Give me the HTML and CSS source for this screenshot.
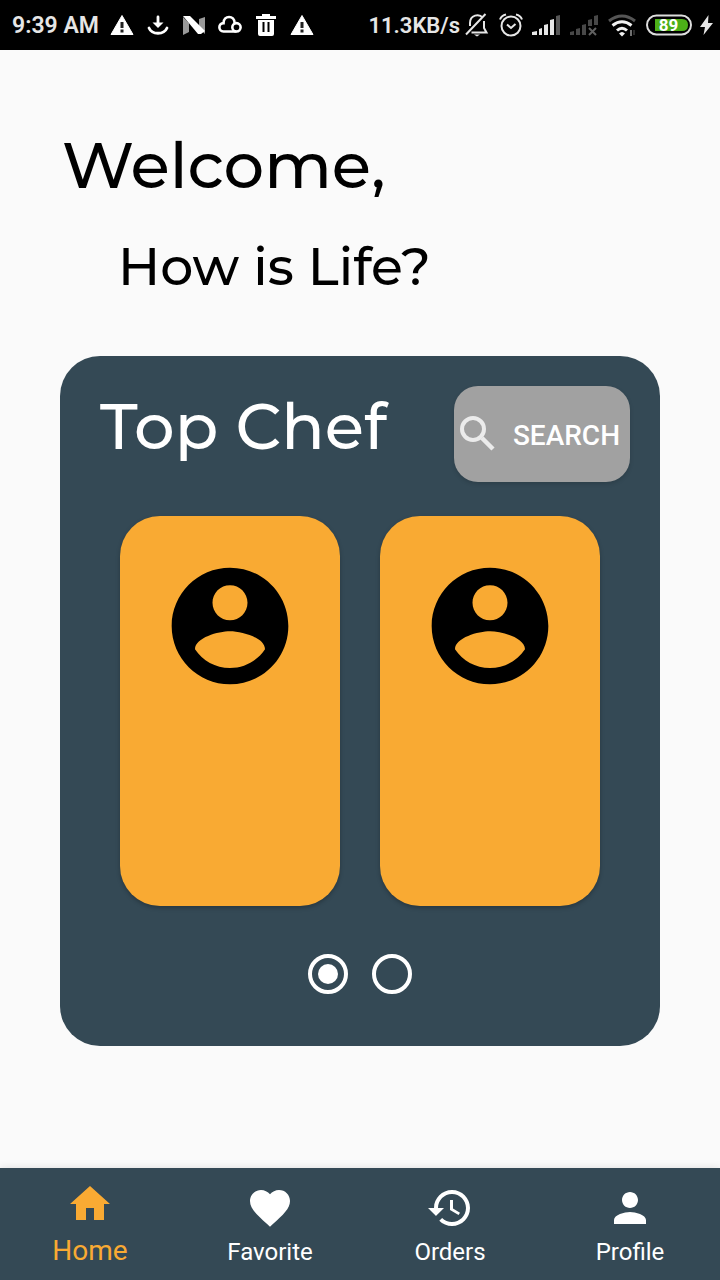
FILE: index.html
```html
<!DOCTYPE html>
<html lang="en">
<head>
<meta charset="utf-8">
<meta name="viewport" content="width=device-width, initial-scale=1">
<title>Top Chef</title>
<link rel="stylesheet" href="styles.css">
</head>
<body>
<header class="status">
  <span class="status-text">9:39 AM</span>
  <div class="notices">
    <svg width="24" height="24" viewBox="0 0 24 24"><path fill="#fff" stroke="#fff" stroke-linejoin="round" d="M12 2.500 23 21.500H1z"/><path d="M10.500 9h3v6h-3zM10.500 16.500h3v3h-3z" fill="#222"/></svg>
    <svg width="24" height="24" viewBox="0 0 24 24" fill="none" stroke="#fff" stroke-width="2.800"><path d="M12 4v8M3 15c3 7 15 7 18 0" stroke-linecap="round"/><path d="M6.500 9.500h11L12 15z" fill="#fff" stroke="none"/></svg>
    <svg width="24" height="24" viewBox="0 0 24 24"><path d="M1 4l6 6v9l-6 3zM23 4v17l-6-6V6z" fill="#999"/><path d="M1 3h7l15 15-4 3h-3z" fill="#fff"/></svg>
    <svg width="24" height="24" viewBox="0 0 26 24" fill="none" stroke="#fff" stroke-width="2.800"><path d="M20 19H6C0 19 0 10 6 10 6 1 18 1 18 10"/><circle cx="20" cy="14.500" r="4.500"/></svg>
    <svg width="24" height="24" viewBox="0 0 24 24"><path d="M2 3h6V1h8v2h6v3H2zM4 7h16v14q0 2-2 2H6q-2 0-2-2z" fill="#fff"/><path d="M9.500 9v10M14.500 9v10" stroke="#000" stroke-width="2"/></svg>
    <svg width="24" height="24" viewBox="0 0 24 24"><path fill="#fff" stroke="#fff" stroke-linejoin="round" d="M12 2.500 23 21.500H1z"/><path d="M10.500 9h3v6h-3zM10.500 16.500h3v3h-3z" fill="#222"/></svg>
  </div>
  <span class="status-text speed">11.3KB/s</span>
  <div class="system">
    <svg width="26" height="26" viewBox="0 0 26 26" fill="none" stroke="#e6e6e6" stroke-width="2"><path d="M2 22.500 21.500 2M6 14V11c0-8 9-10 13-5M20 9v7l2.500 4.500H7.500"/><path d="M10 22.500h6l-3 2z" fill="#e6e6e6" stroke="none"/></svg>
    <svg width="26" height="26" viewBox="0 0 26 26" fill="none" stroke="#e6e6e6" stroke-width="2"><circle cx="13" cy="14" r="9.500"/><path d="M9 12.500l4 3.500 4.500-4M2 7.500Q3.500 3.500 8 2.500M24 7.500Q22.500 3.500 18 2.500"/></svg>
    <svg width="30" height="26" viewBox="0 0 30 26"><path d="M0 20l5-1v4H0zM7 17l3-1v7H7zM12 13l4-1v11h-4zM18 8l4-1v16h-4z" fill="#e6e6e6"/><path d="M24 4l4-1v20h-4z" fill="#555"/></svg>
    <svg width="30" height="26" viewBox="0 0 30 26" fill="#484848"><path d="M0 20l4-1v4H0zM6 17l4-1v7H6zM12 13l4-1v11h-4zM18 8l4-1v7h-4zM24 4l4-1v10h-4z"/><path d="M19 16l7 7m0-7-7 7" stroke="#606060" stroke-width="2"/></svg>
    <svg width="30" height="26" viewBox="0 0 30 26" fill="none" stroke-width="3"><path d="M1 9Q14-1 27 9" stroke="#555"/><path d="M4.500 13.500Q14 6 23.500 13.500M9 18.500q5-4.500 10 0" stroke="#f2f2f2"/><path d="M11 21.500q3-3 6 0l-3 3z" fill="#f2f2f2"/><path d="M23 18v6" stroke="#ddd"  stroke-width="1"/><path d="M26 18v5" stroke="#555" stroke-width="1"/></svg>
    <svg width="46" height="26" viewBox="0 0 46 26"><rect x="1" y="3.500" width="44" height="19" rx="9.500" fill="none" stroke="#ddd" stroke-width="2"/><path d="M9 7h27q6 0 6 6t-6 6H9z" fill="#4caf18"/><text class="battery" x="22.500" y="19" text-anchor="middle">89</text></svg>
    <svg width="14" height="26" viewBox="0 0 14 26"><path d="M8.500 3 0 15h5L3.500 23 13 11H8z" fill="#e6e6e6"/></svg>
  </div>
</header>
<main class="main">
  <h1 class="title">Welcome,</h1>
  <p class="subtitle">How is Life?</p>
  <section class="panel">
    <div class="panel-head">
      <h2 class="title">Top Chef</h2>
      <button class="search" type="button">
        <svg width="40" height="40" viewBox="0 0 40 40" fill="none" stroke="#ebebeb"><circle cx="15" cy="15" r="11" stroke-width="4"/><path d="m24 24 11 11" stroke-width="4.500"/></svg>
        <span class="search-label">Search</span>
      </button>
    </div>
    <div class="cards">
      <article class="card"><svg width="140" height="140" viewBox="0 0 24 24"><path d="M12 2C6.480 2 2 6.480 2 12s4.480 10 10 10 10-4.480 10-10S17.520 2 12 2zm0 3c1.660 0 3 1.340 3 3s-1.340 3-3 3-3-1.340-3-3 1.340-3 3-3zm0 14.200c-2.500 0-4.710-1.280-6-3.220.030-1.990 4-3.080 6-3.080 1.990 0 5.970 1.090 6 3.080-1.290 1.940-3.500 3.220-6 3.220z"/></svg></article>
      <article class="card"><svg width="140" height="140" viewBox="0 0 24 24"><path d="M12 2C6.480 2 2 6.480 2 12s4.480 10 10 10 10-4.480 10-10S17.520 2 12 2zm0 3c1.660 0 3 1.340 3 3s-1.340 3-3 3-3-1.340-3-3 1.340-3 3-3zm0 14.200c-2.500 0-4.710-1.280-6-3.220.030-1.990 4-3.080 6-3.080 1.990 0 5.970 1.090 6 3.080-1.290 1.940-3.500 3.220-6 3.220z"/></svg></article>
    </div>
    <div class="pager">
      <input class="dot" type="radio" name="page" aria-label="Page 1" checked>
      <input class="dot" type="radio" name="page" aria-label="Page 2">
    </div>
  </section>
</main>
<nav class="nav">
  <a class="tab tab-active" href="#home"><svg width="48" height="48" viewBox="0 0 24 24"><path d="M10 20v-6h4v6h5v-8h3L12 3 2 12h3v8z"/></svg><span>Home</span></a>
  <a class="tab" href="#favorite"><svg width="48" height="48" viewBox="0 0 24 24"><path d="M12 21.350l-1.450-1.320C5.400 15.360 2 12.280 2 8.500 2 5.420 4.420 3 7.500 3c1.740 0 3.410.810 4.500 2.090C13.090 3.810 14.760 3 16.500 3 19.580 3 22 5.420 22 8.500c0 3.780-3.400 6.860-8.550 11.540L12 21.350z"/></svg><span>Favorite</span></a>
  <a class="tab" href="#orders"><svg width="48" height="48" viewBox="0 0 24 24"><path d="M13 3c-4.970 0-9 4.030-9 9H1l3.890 3.890.070.140L9 12H6c0-3.870 3.130-7 7-7s7 3.130 7 7-3.130 7-7 7c-1.930 0-3.680-.790-4.940-2.060l-1.420 1.420C8.270 19.990 10.510 21 13 21c4.970 0 9-4.030 9-9s-4.030-9-9-9zm-1 5v5l4.280 2.540.720-1.210-3.500-2.080V8H12z"/></svg><span>Orders</span></a>
  <a class="tab" href="#profile"><svg width="48" height="48" viewBox="0 0 24 24"><path d="M12 12c2.210 0 4-1.790 4-4s-1.790-4-4-4-4 1.790-4 4 1.790 4 4 4zm0 2c-2.670 0-8 1.340-8 4v2h16v-2c0-2.660-5.330-4-8-4z"/></svg><span>Profile</span></a>
</nav>
</body>
</html>
```
FILE: styles.css
```css
* { box-sizing: border-box; }
body {
  margin: 0;
  min-height: 100vh;
  display: flex;
  flex-direction: column;
  background: #fafafa;
  color: #000;
  font-family: Roboto, "Liberation Sans", sans-serif;
}
svg { display: block; flex: none; }
.status {
  display: flex;
  align-items: center;
  height: 50px;
  padding: 0 6px 0 12px;
  background: #000;
}
.status-text {
  padding-top: 2px;
  color: #e6e6e6;
  font-size: 23px;
  line-height: 32px;
  font-weight: 600;
  white-space: nowrap;
}
.notices { display: flex; gap: 12px; margin-left: 11px; }
.speed { margin-left: auto; font-size: 22px; }
.system { display: flex; gap: 8px; margin-left: 4px; }
.battery { fill: #fff; font-size: 17px; font-weight: 700; }
.main { flex: 1; padding: 75px 60px 60px; }
.title, .subtitle {
  margin: 0;
  font-family: Montserrat, Inter, sans-serif;
  font-weight: 500;
}
.title { font-size: 64px; line-height: 80px; }
.main > .title { padding-left: 2px; }
.subtitle { margin-top: 30px; padding-left: 58px; font-size: 52px; line-height: 64px; }
.panel {
  margin-top: 57px;
  padding: 30px 30px 52px;
  border-radius: 40px;
  background: #344955;
  color: #fff;
}
.panel-head {
  display: flex;
  justify-content: space-between;
  align-items: flex-start;
  padding-left: 10px;
}
.search {
  display: flex;
  align-items: center;
  gap: 15px;
  height: 96px;
  padding: 0 10px 0 4px;
  border: 0;
  border-radius: 24px;
  background: #a1a1a1;
  box-shadow: 0 2px 4px rgba(0, 0, 0, .15);
  color: #fff;
  font: 500 28px/32px Roboto, sans-serif;
  text-transform: uppercase;
}
.search-label { padding-top: 4px; }
.cards {
  display: grid;
  grid-template-columns: 1fr 1fr;
  gap: 40px;
  margin-top: 34px;
  padding: 0 30px;
}
.card {
  display: flex;
  justify-content: center;
  min-height: 390px;
  padding-top: 40px;
  border-radius: 40px;
  background: #f9aa33;
  box-shadow: 0 2px 4px rgba(0, 0, 0, .25);
}
.pager { display: flex; justify-content: center; gap: 24px; margin-top: 48px; }
.dot {
  appearance: none;
  width: 40px;
  height: 40px;
  margin: 0;
  border: 4px solid #fff;
  border-radius: 50%;
}
.dot:checked { padding: 6px; background: #fff content-box; }
.nav {
  display: grid;
  grid-template-columns: repeat(4, 1fr);
  padding: 12px 0 6px;
  background: #344955;
  box-shadow: 0 0 8px rgba(0, 0, 0, .12);
}
.tab {
  display: flex;
  flex-direction: column;
  align-items: center;
  justify-content: flex-end;
  padding-bottom: 2px;
  color: #fff;
  fill: currentColor;
  font-size: 24px;
  line-height: 40px;
  text-decoration: none;
}
.tab-active { padding-bottom: 0; color: #f9aa33; font-size: 28px; line-height: 46px; }
```
